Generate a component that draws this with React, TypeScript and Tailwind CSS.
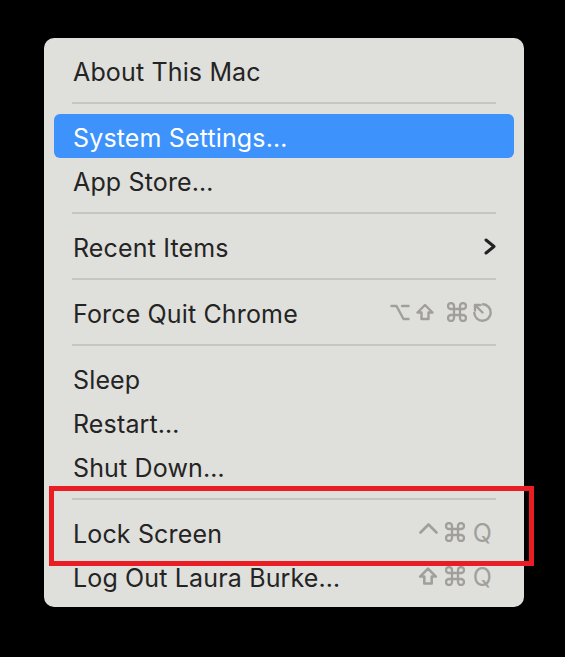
import React from "react";

const GRAY = "#a09f9b";

function OptionKey() {
  return (
    <svg className="block shrink-0" width="20" height="17" viewBox="0 0 20 17" fill="none" stroke={GRAY} strokeWidth="2.4" strokeLinecap="round" strokeLinejoin="round">
      <path d="M1.5 2 H6.5 L13.5 15 H18.5 M12 2 H18.5" />
    </svg>
  );
}

function ShiftKey({ w = 18 }: { w?: number }) {
  return (
    <svg className="block shrink-0" width={w} height="18" viewBox="0 0 18 17" fill="none" stroke={GRAY} strokeWidth="2.4" strokeLinejoin="round">
      <path d="M9 1.5 L1.5 9 H5.5 V15.5 H12.5 V9 H16.5 Z" />
    </svg>
  );
}

function CommandKey() {
  return (
    <svg className="block shrink-0" width="20" height="20" viewBox="0 0 20 20" fill="none" stroke={GRAY} strokeWidth="2.3">
      <path d="M7 7 V4 A3 3 0 1 0 4 7 H16 A3 3 0 1 0 13 4 V16 A3 3 0 1 0 16 13 H4 A3 3 0 1 0 7 16 Z" />
    </svg>
  );
}

function EscapeKey() {
  return (
    <svg className="block shrink-0" width="20" height="20" viewBox="0 0 20 20" fill="none" stroke={GRAY} strokeWidth="2.4" strokeLinecap="round" strokeLinejoin="round">
      <path d="M11 2.3 A8.2 8.2 0 1 1 2.3 11" />
      <path d="M10.5 10.5 L3 3 M3 3 V8.5 M3 3 H8.5" />
    </svg>
  );
}

function ControlKey() {
  return (
    <svg className="block shrink-0" width="19" height="11" viewBox="0 0 19 11" fill="none" stroke={GRAY} strokeWidth="2.6" strokeLinecap="round" strokeLinejoin="round">
      <path d="M1.5 9.5 L9.5 1.5 L17.5 9.5" />
    </svg>
  );
}

function Chevron() {
  return (
    <svg className="block shrink-0" width="12" height="17" viewBox="0 0 12 17" fill="none" stroke="#222222" strokeWidth="3" strokeLinecap="round" strokeLinejoin="round">
      <path d="M2 2 L10 8.5 L2 15" />
    </svg>
  );
}

function Item({ label, active = false, right }: { label: string; active?: boolean; right?: React.ReactNode }) {
  return (
    <div
      className={`flex h-[44px] items-center justify-between rounded-[6px] pl-[19px] pr-[22px] ${
        active ? "bg-[#3d92fc] text-white" : "text-[#242424]"
      }`}
    >
      <span className="mt-[4px] whitespace-nowrap">{label}</span>
      {right}
    </div>
  );
}

function Separator() {
  return (
    <div className="flex h-[22px] items-center px-[18px]">
      <div className="h-[2px] w-full bg-[#c6c6c2]" />
    </div>
  );
}

export default function App() {
  return (
    <div className="relative min-h-[657px] w-[565px] bg-black pl-[44px] pt-[38px] font-['Inter',sans-serif] text-[25px] leading-none tracking-[0.15px]">
      <div className="flex w-[480px] flex-col rounded-[10px] bg-[#dfdfdb] px-[10px] pb-[9px] pt-[10px]">
        <Item label="About This Mac" />
        <Separator />
        <Item label="System Settings…" active />
        <Item label="App Store…" />
        <Separator />
        <Item label="Recent Items" right={<span className="-mr-[4px]"><Chevron /></span>} />
        <Separator />
        <Item
          label="Force Quit Chrome"
          right={
            <div className="flex shrink-0 items-center">
              <OptionKey />
              <span className="ml-[6px]"><ShiftKey /></span>
              <span className="ml-[13px]"><CommandKey /></span>
              <span className="ml-[5px]"><EscapeKey /></span>
            </div>
          }
        />
        <Separator />
        <Item label="Sleep" />
        <Item label="Restart…" />
        <Item label="Shut Down…" />
        <Separator />
        <Item
          label="Lock Screen"
          right={
            <div className="flex shrink-0 items-center text-[#a09f9b]">
              <span className="-mt-[8px]"><ControlKey /></span>
              <span className="ml-[7px]"><CommandKey /></span>
              <span className="ml-[8px] mt-[3px]">Q</span>
            </div>
          }
        />
        <Item
          label="Log Out Laura Burke…"
          right={
            <div className="flex shrink-0 items-center text-[#a09f9b]">
              <ShiftKey w={20} />
              <span className="ml-[7px]"><CommandKey /></span>
              <span className="ml-[8px] mt-[3px]">Q</span>
            </div>
          }
        />
      </div>
      {/* annotation box over the Lock Screen row */}
      <div className="absolute left-[49px] top-[486px] h-[80px] w-[485px] border-[5px] border-[#ea1c24]" />
    </div>
  );
}
